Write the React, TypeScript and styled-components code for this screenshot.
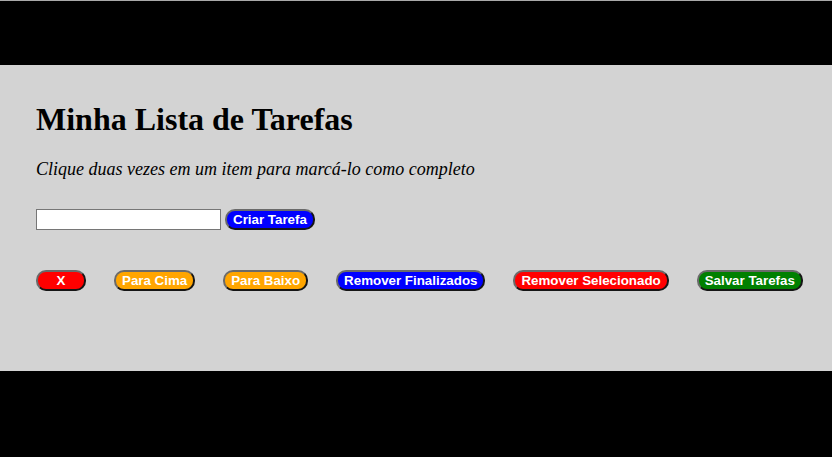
import React from "react";
import styled, { createGlobalStyle } from "styled-components";

const Global = createGlobalStyle`
  html, body { margin: 0; padding: 0; background: #000; }
  body { font-family: "Liberation Serif", "Times New Roman", serif; }
`;

const Page = styled.div`
  display: flex;
  flex-direction: column;
  min-height: 457px;
  border-top: 1px solid #a9a9a9;
  box-sizing: border-box;
`;

const TopBand = styled.header`
  height: 64px;
  background: #000;
`;

const Main = styled.main`
  background: #d3d3d3;
  height: 306px;
  box-sizing: border-box;
  padding: 36px 36px 0;
`;

const Title = styled.h1`
  margin: 0;
  font-size: 32px;
  line-height: 37px;
  font-weight: bold;
  color: #000;
`;

const Hint = styled.p`
  margin: 21px 0 0;
  font-size: 18px;
  line-height: 21px;
  font-style: italic;
  color: #000;
`;

const Form = styled.div`
  display: flex;
  align-items: center;
  gap: 4px;
  margin-top: 29px;
`;

const TaskInput = styled.input`
  width: 185px;
  height: 21px;
  box-sizing: border-box;
  border: 1px solid #767676;
  background: #fff;
  padding: 1px 2px;
  margin: 0;
`;

const Pill = styled.button<{ $bg: string; $w?: number }>`
  flex-shrink: 0;
  white-space: nowrap;
  background: ${(p) => p.$bg};
  color: #fff;
  font-family: "Liberation Sans", Arial, sans-serif;
  font-weight: bold;
  font-size: 13.333px;
  line-height: 15px;
  height: 21px;
  box-sizing: border-box;
  padding: 0 6px;
  border: 2px outset #6a6a6a;
  border-radius: 10px;
  margin: 0;
  ${(p) => (p.$w ? `width: ${p.$w}px;` : "")}
`;

const Actions = styled.div`
  display: flex;
  align-items: center;
  gap: 28px;
  margin-top: 40px;
`;

const BottomBand = styled.footer`
  flex: 1;
  background: #000;
`;

export default function App() {
  return (
    <>
      <Global />
      <Page>
        <TopBand />
        <Main>
          <Title>Minha Lista de Tarefas</Title>
          <Hint>Clique duas vezes em um item para marcá-lo como completo</Hint>
          <Form>
            <TaskInput type="text" />
            <Pill $bg="#0000ff">Criar Tarefa</Pill>
          </Form>
          <Actions>
            <Pill $bg="#ff0000" $w={50}>X</Pill>
            <Pill $bg="#ffa500">Para Cima</Pill>
            <Pill $bg="#ffa500">Para Baixo</Pill>
            <Pill $bg="#0000ff">Remover Finalizados</Pill>
            <Pill $bg="#ff0000">Remover Selecionado</Pill>
            <Pill $bg="#008000">Salvar Tarefas</Pill>
          </Actions>
        </Main>
        <BottomBand />
      </Page>
    </>
  );
}
